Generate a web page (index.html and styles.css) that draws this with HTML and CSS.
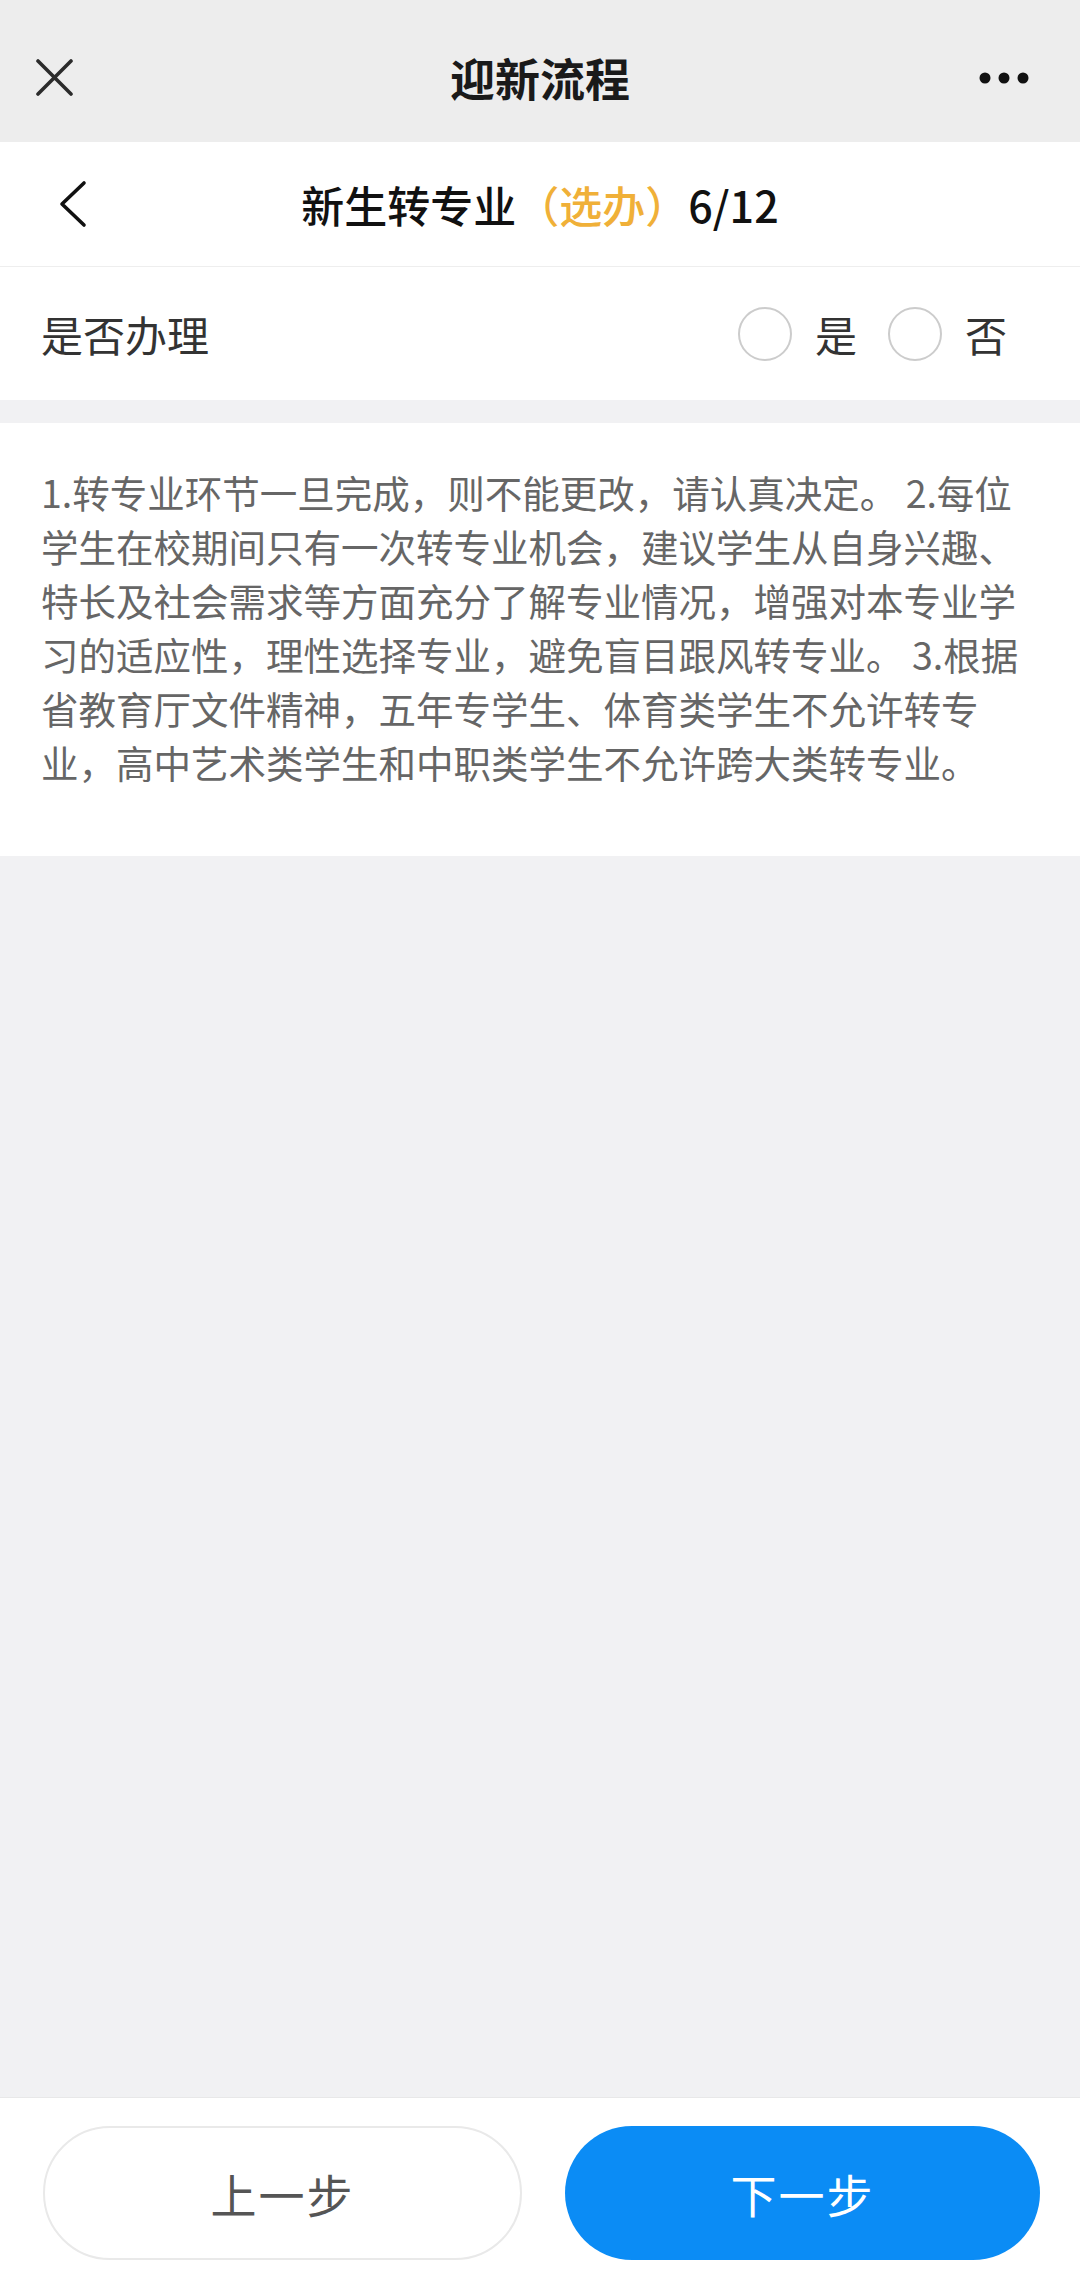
FILE: index.html
```html
<!DOCTYPE html>
<html lang="zh-CN">
<head>
  <meta charset="UTF-8" />
  <meta name="viewport" content="width=device-width, initial-scale=1.0"/>
  <title>迎新流程</title>
  <link rel="stylesheet" href="styles.css">
</head>
<body>

  <div class="page">
    <!-- top nav -->
    <header class="nav-bar">
      <svg class="nav-close" width="37" height="37" viewBox="0 0 37 37">
        <path d="M2 2 L35 35 M35 2 L2 35" stroke="#2b2b2b" stroke-width="3.6" stroke-linecap="round" fill="none"/>
      </svg>
      <h1 class="nav-title">迎新流程</h1>
      <svg class="nav-more" width="50" height="12" viewBox="0 0 50 12">
        <circle cx="6" cy="6" r="5.5" fill="#111"/>
        <circle cx="25" cy="6" r="5.5" fill="#111"/>
        <circle cx="44" cy="6" r="5.5" fill="#111"/>
      </svg>
    </header>

    <!-- step header -->
    <div class="step-head">
      <svg class="step-back" width="30" height="48" viewBox="0 0 30 48">
        <polyline points="26,3 4,24 26,45" stroke="#111" stroke-width="3.6" stroke-linecap="round" stroke-linejoin="round" fill="none"/>
      </svg>
      <h2 class="step-title">新生转专业<span class="optional">（选办）</span>6/12</h2>
      <span></span>
    </div>

    <!-- handle or not -->
    <div class="form-row">
      <span class="form-label">是否办理</span>
      <div class="radio-group">
        <label class="radio"><input type="radio" name="handle" value="yes"><span>是</span></label>
        <label class="radio"><input type="radio" name="handle" value="no"><span>否</span></label>
      </div>
    </div>

    <div class="notice">
      <p>1.转专业环节一旦完成，则不能更改，请认真决定。 2.每位学生在校期间只有一次转专业机会，建议学生从自身兴趣、特长及社会需求等方面充分了解专业情况，增强对本专业学习的适应性，理性选择专业，避免盲目跟风转专业。 3.根据省教育厅文件精神，五年专学生、体育类学生不允许转专业，高中艺术类学生和中职类学生不允许跨大类转专业。</p>
    </div>

    <div class="filler"></div>

    <footer class="actions">
      <button class="btn btn-prev">上一步</button>
      <button class="btn btn-next">下一步</button>
    </footer>
  </div>

</body>
</html>
```

FILE: styles.css
```css
* { box-sizing: border-box; margin:0; padding:0; }
html, body {
  height: 100%;
  font-family: "Noto Sans CJK SC", "Noto Sans", sans-serif;
  background: #f1f1f3;
}

.page {
  min-height: 100vh;
  display: flex;
  flex-direction: column;
}

/* Top nav */
.nav-bar {
  height: 142px;
  background: #ededed;
  display: grid;
  grid-template-columns: 1fr auto 1fr;
  align-items: center;
  padding: 13px 36px 0;
}

.nav-title {
  font-size: 45px;
  font-weight: 700;
  color: #1a1a1a;
  line-height: 1;
}

.nav-more {
  justify-self: end;
  margin-right: 15px;
}

/* Step header */
.step-head {
  height: 125px;
  background: #fff;
  border-bottom: 1px solid #eeeeee;
  display: grid;
  grid-template-columns: 1fr auto 1fr;
  align-items: center;
  padding: 0 58px;
}

.step-title {
  font-size: 43px;
  font-weight: 500;
  color: #111;
  line-height: 1;
}

.optional {
  color: #f0b038;
}

/* Form row */
.form-row {
  height: 133px;
  background: #fff;
  display: flex;
  align-items: center;
  justify-content: space-between;
  padding: 0 73px 0 41px;
}

.form-label {
  font-size: 42px;
  color: #333;
}

.radio-group {
  display: flex;
  gap: 31px;
}

.radio {
  display: flex;
  align-items: center;
  gap: 23px;
  font-size: 42px;
  color: #333;
}

.radio input {
  appearance: none;
  width: 54px;
  height: 54px;
  border: 2px solid #cccccc;
  border-radius: 50%;
  background: #fff;
}

/* Notice text */
.notice {
  margin-top: 23px;
  background: #fff;
  padding: 42px 41px 67px;
}

.notice p {
  font-size: 37.5px;
  line-height: 54px;
  color: #666;
}

.filler { flex: 1; }

/* Bottom actions */
.actions {
  height: 189px;
  background: #fff;
  border-top: 1px solid #e8e8e8;
  display: flex;
  gap: 43px;
  padding: 28px 40px 0 43px;
}

.btn {
  flex: 1;
  height: 134px;
  border-radius: 67px;
  font-family: inherit;
  font-size: 46px;
  letter-spacing: 2px;
  cursor: pointer;
}

.btn-prev {
  background: #fff;
  border: 2px solid #e9e9e9;
  color: #555;
}

.btn-next {
  background: #0b8cf5;
  border: none;
  color: #fff;
}
```
